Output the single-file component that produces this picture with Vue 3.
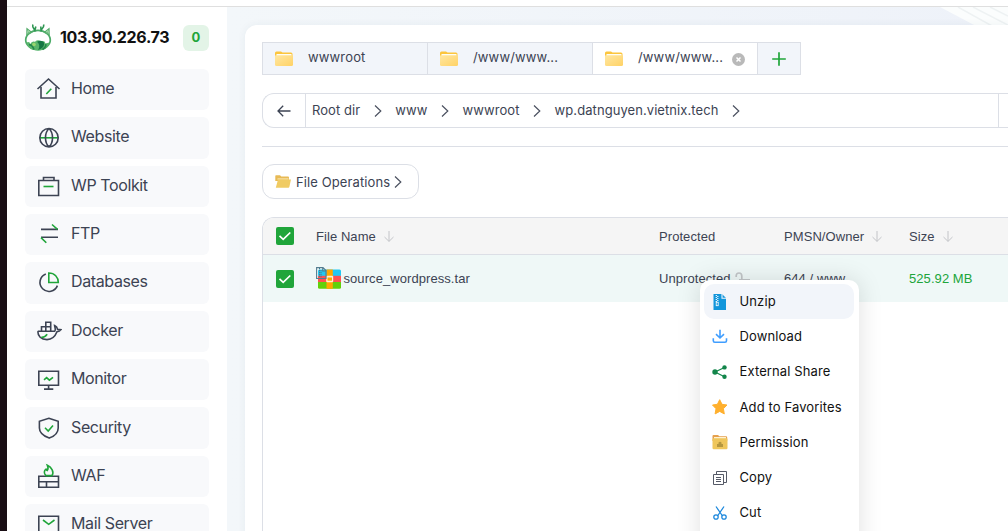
<script setup>
const dark = '#3c4353'
const green = '#20a53a'

const nav = [
  { label: 'Home', paths: [
    { d: 'M1.5 13 12.5 3 23.5 13', c: dark },
    { d: 'M5 11V22H20V11', c: dark },
    { d: 'M10.3 18 15.3 12.8', c: green }] },
  { label: 'Website', paths: [
    { d: 'M4 13.8H22', c: green },
    { d: 'M13 4.5A9.2 9.2 0 1 0 13 22.9A9.2 9.2 0 1 0 13 4.5M13 4.5C8.3 9 8.3 18.5 13 22.9M13 4.5C17.7 9 17.7 18.5 13 22.9', c: dark }] },
  { label: 'WP Toolkit', paths: [
    { d: 'M2.8 7.5H22.5V22.5H2.8ZM7.5 7.5V4.5H18V7.5', c: dark },
    { d: 'M7.5 13.5H17.5', c: green }] },
  { label: 'FTP', paths: [
    { d: 'M5 8.4H22M5 16.2H22', c: dark },
    { d: 'M16 3.5 21.5 8.3M5 16.6 10.3 21.8', c: green }] },
  { label: 'Databases', paths: [
    { d: 'M9.8 5A9 9 0 1 0 21.4 16.6', c: dark },
    { d: 'M12.8 4V13.5H22.3C22.3 8 18.6 4 12.8 4Z', c: green }] },
  { label: 'Docker', paths: [
    { d: 'M1.8 13.3H18.6C20 12.5 19 10 18.6 7.5C20.6 8.4 21.3 9.6 21.5 11.2L25 11.6C23.8 13.2 22.5 13.6 21 13.8C18.8 19.3 15.5 21.6 11 21.6C5 21.6 1.8 18 1.8 13.3M5.5 13V8.8H14.7V13M9.8 13V4.3H14.7V9', c: dark },
    { d: 'M5.2 19.2C8.5 19.5 9.5 18.5 11.2 16.2', c: green }] },
  { label: 'Monitor', paths: [
    { d: 'M2.8 5.2H22.5V19.3H2.8ZM12.6 19.3V23M8 23.1H17.3', c: dark },
    { d: 'M8 13.8 10.6 11.6 13.4 14.2 17 11.3', c: green }] },
  { label: 'Security', paths: [
    { d: 'M12.8 4.3 22.2 7.3V14C22.2 18.8 18 22.4 13.2 24.1C7.5 22 3.4 18.8 3.4 14V7.3Z', c: dark },
    { d: 'M9 13.8 12.2 17 17 11.5', c: green }] },
  { label: 'WAF', paths: [
    { d: 'M2.8 13.3H22.5V24.3H2.8ZM2.8 18.8H22.5M10.5 18.8V24', c: dark },
    { d: 'M10 12.6C7.6 10.5 8 7.6 10 6.2C10.4 7.2 10.7 7.4 11.2 7.5C12.4 5.8 12.2 4 11.4 2.3C15.6 4 18.4 9.2 16 12.6Z', c: green }] },
  { label: 'Mail Server', paths: [
    { d: 'M2.8 5.2H22.5V21.5H2.8Z', c: dark },
    { d: 'M7 9 12.7 13.3 18.5 9', c: green }] }
]

const tabs = [
  { label: 'wwwroot' },
  { label: '/www/www...' },
  { label: '/www/www...', active: true }
]

const crumbs = ['Root dir', 'www', 'wwwroot', 'wp.datnguyen.vietnix.tech']
const menu = [
  { key: 'unzip', label: 'Unzip' },
  { key: 'download', label: 'Download' },
  { key: 'share', label: 'External Share' },
  { key: 'star', label: 'Add to Favorites' },
  { key: 'perm', label: 'Permission' },
  { key: 'copy', label: 'Copy' },
  { key: 'cut', label: 'Cut' }
]
</script>

<template>
  <div class="screen">
    <div class="edge"></div>
    <div class="window">
      <div class="topline"></div>
      <div class="body">
        <aside class="sidebar">
          <div class="brand">
            <svg class="logo" width="28" height="28" viewBox="0 0 28 28">
              <ellipse cx="14" cy="17" rx="12.3" ry="9.600" fill="#fff" stroke="#4cab68" stroke-width="1.7" />
              <path d="M2.200 13 2.400 4.500 8.500 9.200ZM25.800 13 25.600 4.500 19.500 9.200Z" fill="#56ad6c" />
              <path d="M3.800 10.500 3.900 7.500 6 9.200M24.200 10.500 24.100 7.500 22 9.200" fill="none" stroke="#c9ebc9" stroke-width=".8" />
              <path d="M11 8.500C11 5 8 6 8.800 1.500M11 7 11.800 3.500M17 8.500C17 5 20 6 19.800 1.500M17 7 16.800 3.500" fill="none" stroke="#2f9653" stroke-width="1.600" />
              <path d="M2.500 19.500Q5.500 18 6.500 21Q7.500 17.500 11 18.700Q14 16 17 18.500Q20.500 17 21.500 20.500L25.500 19.500Q24 27.500 14 27.500Q4 27.500 2.500 19.500Z" fill="#59b56b" />
              <path d="M13 18.700Q17.500 16.500 20 19.500Q21 25 14 27Q17 22 13 18.700Z" fill="#167744" />
              <path d="M5 22Q8 21 10 26.500M21.500 21Q23 23 18.500 26.500" fill="none" stroke="#23864c" stroke-width="1.600" />
              <circle cx="10" cy="21.500" r="1.800" fill="#9bd56f" />
            </svg>
            <span class="ip">103.90.226.73</span>
            <span class="count">0</span>
          </div>
          <nav class="nav">
            <div v-for="n in nav" :key="n.label" class="nav-item">
              <svg width="26" height="26" viewBox="0 0 26 26" fill="none">
                <path v-for="(p, i) in n.paths" :key="i" :d="p.d" :stroke="p.c" stroke-width="1.6" />
              </svg>
              <span>{{ n.label }}</span>
            </div>
          </nav>
        </aside>

        <main class="content">
          <svg class="rays" width="68" height="19" viewBox="0 0 68 19">
            <path d="M0 0H68V19H36Z" fill="#fbfdfd" />
            <path d="M18 0 52 19M33 0 68 18M50 0 68 9" stroke="#eef2f3" stroke-width="1.500" />
          </svg>
          <section class="panel">
            <div class="tabs">
              <div v-for="(t, i) in tabs" :key="i" class="tab" :class="{ active: t.active }">
                <svg width="18" height="16" viewBox="0 0 18 16">
                  <defs>
                    <linearGradient :id="'folder' + i" x1="0" y1="0" x2="1" y2="1">
                      <stop offset="0" stop-color="#ffe7a2" />
                      <stop offset="1" stop-color="#ffd265" />
                    </linearGradient>
                  </defs>
                  <path d="M0 2Q0 .5 1.500 .5H6L7.500 1.500H16Q17.500 1.500 17.500 3V7H0Z" fill="#fcc53d" />
                  <path d="M1.500 3H16.500V5H1.500Z" fill="#fffdf3" />
                  <path d="M0 5.500Q0 4.300 1 4.300H17Q18 4.300 18 5.500V13.500Q18 15 16.500 15H1.500Q0 15 0 13.500Z" :fill="`url(#folder${i})`" />
                </svg>
                <span>{{ t.label }}</span>
                <svg v-if="t.active" class="close" width="13" height="13" viewBox="0 0 13 13">
                  <circle cx="6.500" cy="6.500" r="6.500" fill="#b9b9b9" />
                  <path d="M4.500 4.500 8.500 8.500M8.500 4.500 4.500 8.500" stroke="#fff" stroke-width="1.500" />
                </svg>
              </div>
              <div class="tab-add">
                <svg width="14" height="14" viewBox="0 0 14 14"><path d="M7 .2V13.800M.2 7H13.800" stroke="#20a53a" stroke-width="1.700" /></svg>
              </div>
            </div>

            <div class="path">
              <div class="back">
                <svg width="14" height="12" viewBox="0 0 14 12"><path d="M13.500 6H1M6.200 .7 1 6 6.200 11.300" fill="none" stroke="#3c4353" stroke-width="1.300" /></svg>
              </div>
              <div class="crumbs">
                <template v-for="c in crumbs" :key="c">
                  <span>{{ c }}</span>
                  <svg class="chev" width="8" height="12" viewBox="0 0 8 12"><path d="M1 .5 6.800 6 1 11.500" fill="none" stroke="#4b5160" stroke-width="1.200" /></svg>
                </template>
              </div>
              <div class="refresh"></div>
            </div>

            <div class="rule"></div>

            <div class="ops">
              <svg width="16" height="13" viewBox="0 0 16 13">
                <path d="M.3 12V1Q.3 .2 1 .2H5L6.300 1.500H13Q14 1.500 14 2.500V6H.3Z" fill="#e8ba55" />
                <path d="M2.500 3.500H13.500V4.500H2.500Z" fill="#fff3cf" />
                <path d="M3 4.600H16L14.400 11.800Q14.200 12.800 13.300 12.800H.8Z" fill="#f0cb63" />
              </svg>
              <span>File Operations</span>
              <svg class="ops-chev" width="8" height="12" viewBox="0 0 8 12"><path d="M1 .5 6.800 6 1 11.500" fill="none" stroke="#4b5160" stroke-width="1.200" /></svg>
            </div>

            <div class="table">
              <div class="row head">
                <span class="check"><svg width="18" height="18" viewBox="0 0 18 18"><path d="M3.500 8.800 7.200 12.300 14.300 5.500" fill="none" stroke="#fff" stroke-width="1.700" /></svg></span>
                <span class="cell">File Name<svg class="sort" width="10" height="11" viewBox="0 0 10 11"><path d="M5 0V10.300M.5 6 5 10.400 9.500 6" fill="none" stroke="#c3c4c8" /></svg></span>
                <span class="cell">Protected</span>
                <span class="cell">PMSN/Owner<svg class="sort" width="10" height="11" viewBox="0 0 10 11"><path d="M5 0V10.300M.5 6 5 10.400 9.500 6" fill="none" stroke="#c3c4c8" /></svg></span>
                <span class="cell">Size<svg class="sort" width="10" height="11" viewBox="0 0 10 11"><path d="M5 0V10.300M.5 6 5 10.400 9.500 6" fill="none" stroke="#c3c4c8" /></svg></span>
              </div>
              <div class="row data">
                <span class="check"><svg width="18" height="18" viewBox="0 0 18 18"><path d="M3.500 8.800 7.200 12.300 14.300 5.500" fill="none" stroke="#fff" stroke-width="1.700" /></svg></span>
                <span class="cell">
                  <svg class="archive" width="26" height="22" viewBox="0 0 26 22">
                    <rect x="2" y="2.500" width="23" height="7" rx="1.500" fill="#22c8f2" />
                    <rect x="2" y="8.800" width="23" height="6.500" fill="#ff5252" />
                    <path d="M2 15H25V20.500Q25 21.800 23.500 21.800H3.500Q2 21.800 2 20.500Z" fill="#62d10b" />
                    <rect x="10.500" y="2.500" width="6.300" height="19.300" fill="#ffa800" />
                    <rect x="10.200" y="8.800" width="7" height="6.500" rx="1" fill="#fff0d2" />
                    <rect x="11.500" y="10.500" width="4.500" height="3.200" fill="#ffa800" />
                    <path d="M.6 .6H7L10 3.500V11.500H.6ZM6.700 1V4H10" fill="none" stroke="#547d90" stroke-width="1.100" />
                    <path d="M3.500 1V10M5 3V10" stroke="#44778c" stroke-dasharray="1.200 .7" />
                  </svg>
                  source_wordpress.tar
                </span>
                <span class="cell">Unprotected
                  <svg class="lock" width="16" height="14" viewBox="0 0 16 14"><path d="M1.200 5V4Q1.200 1 4 1Q6.800 1 6.800 4V8" fill="none" stroke="#c2c6c8" stroke-width="1.700" /><rect x="4" y="7" width="11" height="7" fill="#c2c6c8" /></svg>
                </span>
                <span class="cell">644 / www</span>
                <span class="cell size">525.92 MB</span>
              </div>
            </div>
          </section>
        </main>
      </div>
    </div>

    <div class="menu">
      <div v-for="(m, i) in menu" :key="m.key" class="menu-item" :class="{ hover: i === 0 }">
        <svg width="16" height="16" viewBox="0 0 16 16" fill="none">
          <template v-if="m.key === 'unzip'">
            <path d="M1.500 0H10L14 4V16H1.500Z" fill="#1296db" />
            <path d="M10 0V4.200H14" stroke="#f2f5fa" stroke-width="1.100" />
            <path d="M4.300 1V8M5.800 2V8" stroke="#fff" stroke-width="1.200" stroke-dasharray="1 1" />
            <rect x="4.200" y="8.200" width="2" height="3.500" stroke="#fff" stroke-width=".8" />
          </template>
          <template v-else-if="m.key === 'download'">
            <path d="M8 .8V9M4 5.200 8 9 12 5.200" stroke="#409eff" stroke-width="1.600" />
            <path d="M1.300 9.300V11.800Q1.300 13.300 2.800 13.300H13Q14.500 13.300 14.500 11.800V9.300" stroke="#409eff" stroke-width="1.600" />
          </template>
          <template v-else-if="m.key === 'share'">
            <path d="M12.500 3.500 3 8 12.500 12.700" stroke="#12854a" stroke-width="1.200" />
            <circle cx="3" cy="8" r="2.700" fill="#12854a" /><circle cx="12.500" cy="3.400" r="2.200" fill="#12854a" /><circle cx="12.500" cy="12.700" r="2.200" fill="#12854a" />
          </template>
          <path v-else-if="m.key === 'star'" d="M7.700 .7 10 5.300 15 6 11.400 9.700 12.300 14.900 7.700 12.400 3.100 14.900 4 9.700 .5 6 5.400 5.300Z" fill="#ffb02e" stroke="#ffb02e" stroke-linejoin="round" />
          <template v-else-if="m.key === 'perm'">
            <path d="M.5 7V2Q.5 .9 1.500 .9H6L7.300 2.200H14Q15.200 2.200 15.200 3.500V7Z" fill="#e5a04d" />
            <path d="M2 3H14V5H2Z" fill="#fff1d0" />
            <rect x=".5" y="4.200" width="15" height="11" rx="1.200" fill="#efc65b" />
            <path d="M5 10H11V13H5ZM6.500 10V8.500Q8 6.800 9.500 8.500V10" fill="#b5973f" />
          </template>
          <template v-else-if="m.key === 'copy'">
            <path d="M1.500 4.500H11.500V14.500H1.500ZM4.500 4V1.500H14.500V12.500H12M4 7.500H9M4 9.500H9M4 11.500H9" stroke="#555a67" />
          </template>
          <template v-else>
            <path d="M4 1.500 10.500 11M12 1.500 5.500 11" stroke="#1b87dc" stroke-width="1.250" />
            <circle cx="4" cy="12" r="2.200" stroke="#1b87dc" stroke-width="1.250" /><circle cx="12" cy="12" r="2.200" stroke="#1b87dc" stroke-width="1.250" />
          </template>
        </svg>
        <span>{{ m.label }}</span>
      </div>
    </div>
  </div>
</template>

<style>
html, body { overflow: hidden; }
</style>

<style scoped>
* { box-sizing: border-box; }
.screen { position: relative; display: flex; width: 1008px; height: 531px; overflow: hidden; background: #fff; font-family: Inter, "Liberation Sans", sans-serif; color: #3c4353; }
svg { display: block; flex: none; }
.edge { width: 7px; background: #1a0e14; }
.window { flex: 1; min-width: 0; display: flex; flex-direction: column; }
.topline { height: 7px; border-bottom: 1px solid #dfdfdf; }
.body { flex: 1; min-height: 0; display: flex; }
.sidebar { width: 220px; padding: 17px 18px 0; flex: none; background: #fff; }
.brand { display: flex; align-items: center; height: 28px; }
.logo { margin-left: -1px; margin-top: -2px; }
.ip { width: 131px; padding-left: 8px; margin-top: -2px; font-size: 16px; line-height: 26px; font-weight: 700; letter-spacing: -.3px; color: #111; white-space: nowrap; }
.count { width: 26px; height: 26px; border-radius: 6px; background: #e3f4e7; color: #20a53a; font-size: 13px; line-height: 25px; font-weight: 700; text-align: center; }
.nav { padding-top: 17px; display: flex; flex-direction: column; gap: 7px; }
.nav-item { height: 41.35px; flex: none; display: flex; align-items: flex-start; padding: 7px 0 0 11px; background: #f8f9fb; border-radius: 6px; font-size: 16px; line-height: 24px; letter-spacing: -.38px; }
.nav-item span { padding-left: 9px; padding-top: .1px; white-space: nowrap; }
.content { position: relative; flex: 1; min-width: 0; padding: 18px 0 0 18px; overflow: hidden; background: linear-gradient(90deg, #f3f7fa, #eef2f9); }
.rays { position: absolute; right: 0; top: 0; }
.panel { position: relative; height: 520px; padding: 17px 0 0 17px; background: #fff; border-radius: 12px 0 0 0; box-shadow: 0 0 8px rgba(40, 60, 90, .06); }
.tabs { display: flex; width: 539px; height: 33px; border: 1px solid #dcdfe6; border-left: 0; }
.tab { width: 165px; display: flex; align-items: center; padding-left: 12px; border-left: 1px solid #dcdfe6; background: #f2f5fa; font-size: 13px; letter-spacing: .15px; }
.tab span { width: 101px; padding-left: 15px; margin-top: -3px; white-space: nowrap; }
.tab.active { background: #fff; }
.close { margin-left: 8px; margin-top: 1px; }
.tab-add { flex: 1; display: flex; align-items: center; justify-content: center; background: #f2f5fa; border-left: 1px solid #dcdfe6; }
.path { margin-top: 18px; height: 35px; display: flex; border: 1px solid #dcdfe6; border-right: 0; border-radius: 12px 0 0 12px; }
.back { width: 43px; display: flex; align-items: center; justify-content: center; border-right: 1px solid #dcdfe6; }
.crumbs { flex: 1; display: flex; align-items: center; padding-left: 6px; font-size: 13px; letter-spacing: .07px; white-space: nowrap; }
.crumbs span { margin-top: -1px; }
.chev { margin: 0 13.6px 0 13.5px; }
.refresh { width: 10px; border-left: 1px solid #dcdfe6; }
.rule { margin-top: 18px; height: 1px; background: #dcdfe6; }
.ops { margin-top: 17px; width: 157px; height: 35px; display: flex; align-items: center; padding-left: 12px; border: 1px solid #dcdfe6; border-radius: 12px; font-size: 13px; letter-spacing: .1px; white-space: nowrap; }
.ops svg:first-child { margin-top: -1px; }
.ops span { padding-left: 5px; }
.ops-chev { margin-left: 3.500px; }
.table { margin-top: 18px; height: 340px; border: 1px solid #dcdfe6; border-right: 0; border-radius: 12px 0 0 0; overflow: hidden; font-family: "Liberation Sans", Arial, sans-serif; font-size: 13px; letter-spacing: .07px; }
.row { display: grid; grid-template-columns: 53px 343px 125px 125px 1fr; align-items: center; }
.head { height: 37px; background: #f5f5f5; border-bottom: 1px solid #dcdfe6; }
.data { height: 47px; background: #eff8f7; }
.check { margin-left: 13px; width: 18px; height: 18px; border-radius: 2px; background: #20a53a; }
.cell { display: flex; align-items: center; white-space: nowrap; }
.sort { margin-left: 8px; }
.archive { margin-right: 1.500px; margin-top: -2px; }
.lock { margin-left: 4px; }
.size { color: #20a53a; }
.menu { position: absolute; left: 700px; top: 280px; width: 159px; height: 290px; padding: 4px 5px 0 4px; background: #fff; border-radius: 10px; box-shadow: 0 0 24px rgba(0, 0, 0, .13); }
.menu-item { height: 35.2px; display: flex; align-items: center; padding-left: 8px; border-radius: 10px; font-size: 13px; letter-spacing: .12px; color: #111; white-space: nowrap; }
.menu-item span { padding-left: 11.500px; margin-top: -1px; }
.hover { background: #f2f5fa; }
</style>
